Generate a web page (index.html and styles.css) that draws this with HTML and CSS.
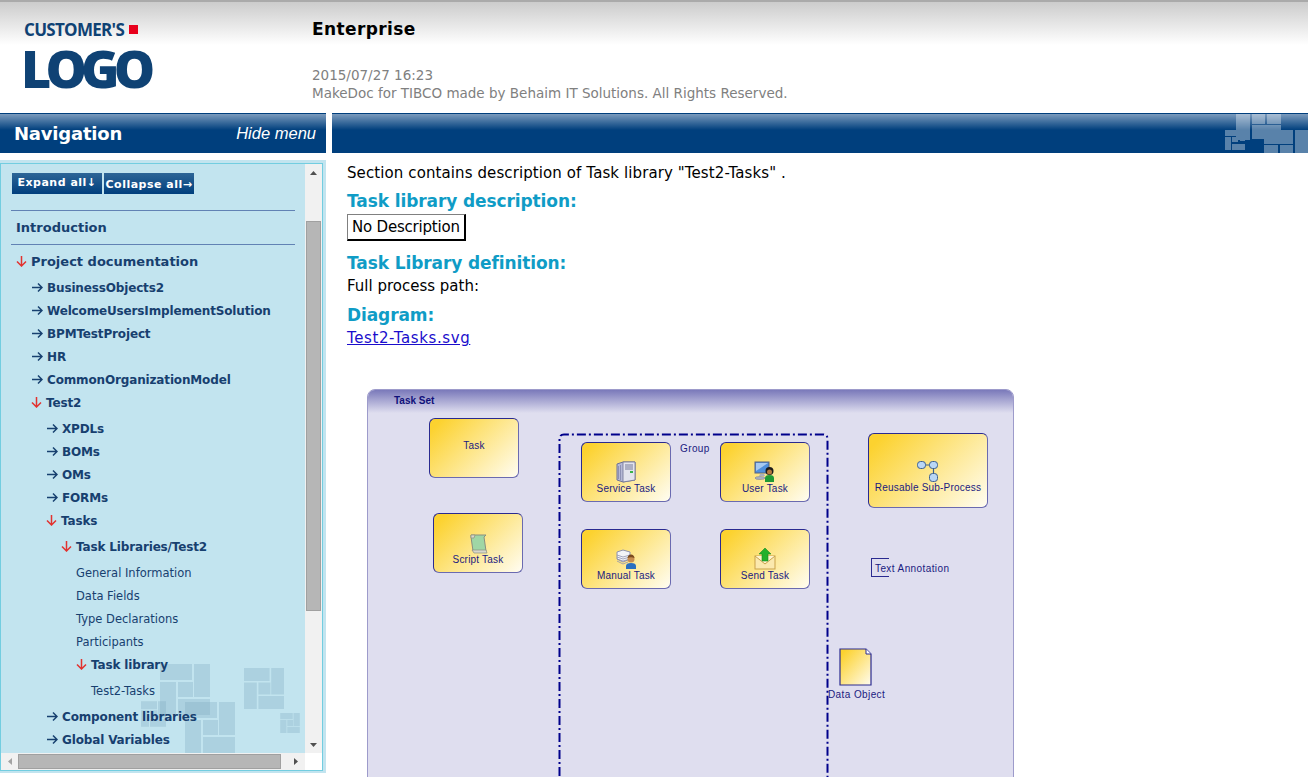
FILE: index.html
```html
<!DOCTYPE html>
<html lang="en">
<head>
    <meta charset="UTF-8">
    <meta name="viewport" content="width=device-width, initial-scale=1.0">
    <title>Enterprise - MakeDoc</title>
    <link rel="stylesheet" href="styles.css">
</head>
<body>
    <svg class="defs" width="0" height="0">
        <symbol id="arrow-right" viewBox="0 0 11 11">
            <path d="M0 5.5H10M6 1.5L10 5.5L6 9.5" fill="none" stroke="#17406f" stroke-width="1.5"/>
        </symbol>
        <symbol id="arrow-down" viewBox="0 0 11 11">
            <path d="M5.5 0V10M1 5.5L5.5 10L10 5.5" fill="none" stroke="#e2322f" stroke-width="1.5"/>
        </symbol>
        <symbol id="blocks" viewBox="0 0 50 51">
            <path d="M0 0h32v16H0zM34 0h16v33H34zM0 18h16v33H0zM18 18h15v15H18zM18 35h32v16H18z"/>
        </symbol>
    </svg>

    <header class="top">
        <div class="logo">
            <div class="logo-small">CUSTOMER'S<span class="logo-square"></span></div>
            <div class="logo-big">LOGO</div>
        </div>
        <div class="top-info">
            <h1>Enterprise</h1>
            <p>2015/07/27 16:23</p>
            <p>MakeDoc for TIBCO made by Behaim IT Solutions. All Rights Reserved.</p>
        </div>
    </header>

    <div class="columns">
        <aside class="side">
            <div class="bar side-bar">
                <span class="side-title">Navigation</span>
                <span class="side-hide">Hide menu</span>
            </div>
            <div class="panel">
                <div class="panel-inner">
                    <nav class="tree-area">
                        <svg class="panel-marks" width="304" height="100" viewBox="0 0 304 100">
                            <use href="#blocks" x="159" y="11" width="50" height="51"/>
                            <use href="#blocks" x="243" y="15" width="40" height="41"/>
                            <use href="#blocks" x="184" y="49" width="50" height="51"/>
                            <use href="#blocks" x="140" y="48" width="25" height="26"/>
                            <use href="#blocks" x="279" y="60" width="20" height="20"/>
                        </svg>
                        <div class="tree-buttons">
                            <button type="button">Expand all↓</button>
                            <button type="button" class="btn-low">Collapse all→</button>
                        </div>
                        <hr>
                        <div class="row row-top">Introduction</div>
                        <hr>
                        <ul class="tree">
                            <li>
                                <div class="row row-top"><svg class="arrow"><use href="#arrow-down"/></svg>Project documentation</div>
                                <ul>
                                    <li><div class="row row-strong"><svg class="arrow arrow-r"><use href="#arrow-right"/></svg>BusinessObjects2</div></li>
                                    <li><div class="row row-strong"><svg class="arrow arrow-r"><use href="#arrow-right"/></svg>WelcomeUsersImplementSolution</div></li>
                                    <li><div class="row row-strong"><svg class="arrow arrow-r"><use href="#arrow-right"/></svg>BPMTestProject</div></li>
                                    <li><div class="row row-strong"><svg class="arrow arrow-r"><use href="#arrow-right"/></svg>HR</div></li>
                                    <li><div class="row row-strong"><svg class="arrow arrow-r"><use href="#arrow-right"/></svg>CommonOrganizationModel</div></li>
                                    <li>
                                        <div class="row row-strong"><svg class="arrow"><use href="#arrow-down"/></svg>Test2</div>
                                        <ul>
                                            <li><div class="row row-strong"><svg class="arrow arrow-r"><use href="#arrow-right"/></svg>XPDLs</div></li>
                                            <li><div class="row row-strong"><svg class="arrow arrow-r"><use href="#arrow-right"/></svg>BOMs</div></li>
                                            <li><div class="row row-strong"><svg class="arrow arrow-r"><use href="#arrow-right"/></svg>OMs</div></li>
                                            <li><div class="row row-strong"><svg class="arrow arrow-r"><use href="#arrow-right"/></svg>FORMs</div></li>
                                            <li>
                                                <div class="row row-strong"><svg class="arrow"><use href="#arrow-down"/></svg>Tasks</div>
                                                <ul>
                                                    <li>
                                                        <div class="row row-strong"><svg class="arrow"><use href="#arrow-down"/></svg>Task Libraries/Test2</div>
                                                        <ul>
                                                            <li><div class="row">General Information</div></li>
                                                            <li><div class="row">Data Fields</div></li>
                                                            <li><div class="row">Type Declarations</div></li>
                                                            <li><div class="row">Participants</div></li>
                                                            <li>
                                                                <div class="row row-strong"><svg class="arrow"><use href="#arrow-down"/></svg>Task library</div>
                                                                <ul class="tree-end">
                                                                    <li><div class="row">Test2-Tasks</div></li>
                                                                </ul>
                                                            </li>
                                                        </ul>
                                                    </li>
                                                </ul>
                                            </li>
                                            <li><div class="row row-strong"><svg class="arrow arrow-r"><use href="#arrow-right"/></svg>Component libraries</div></li>
                                            <li><div class="row row-strong"><svg class="arrow arrow-r"><use href="#arrow-right"/></svg>Global Variables</div></li>
                                        </ul>
                                    </li>
                                </ul>
                            </li>
                        </ul>
                    </nav>
                    <div class="sb-v">
                        <svg class="sb-btn" width="17" height="17"><path d="M5 11H12L8.5 7Z" fill="#505050"/></svg>
                        <div class="sb-v-thumb"></div>
                        <svg class="sb-btn" width="17" height="17"><path d="M5 7H12L8.5 11Z" fill="#505050"/></svg>
                    </div>
                    <div class="sb-h">
                        <svg class="sb-btn" width="17" height="17"><path d="M11 5V12L7 8.5Z" fill="#a3a3a3"/></svg>
                        <div class="sb-h-thumb"></div>
                        <svg class="sb-btn" width="17" height="17"><path d="M6 5V12L10 8.5Z" fill="#505050"/></svg>
                    </div>
                </div>
            </div>
        </aside>

        <main class="content">
            <div class="bar content-bar">
                <svg class="bar-marks" width="83" height="40" viewBox="0 0 83 40">
                    <path d="M11 0h14v26H11zM27 0h13v10H27zM42 0h14v10H42zM27 11h29v14H27zM39 16h29v14H39zM70 16h13v24H70zM39 31h14v9H39zM55 31h13v9H55zM0 16h13v6H0zM0 23h6v13H0zM7 23h6v5H7zM7 30h13v6H7zM15 16h5v11h-5z"/>
                </svg>
            </div>
            <div class="doc">
                <p class="intro">Section contains description of Task library "Test2-Tasks" .</p>
                <h2>Task library description:</h2>
                <div class="desc-box">No Description</div>
                <h2 class="h-def">Task Library definition:</h2>
                <p>Full process path:</p>
                <h2 class="h-diagram">Diagram:</h2>
                <p><a href="#">Test2-Tasks.svg</a></p>

                <div class="diagram">
                    <div class="diagram-head">Task Set</div>

                    <svg class="group-line" width="272" height="360" viewBox="0 0 272 360">
                        <path d="M1.5 360V6Q1.5 1.5 6 1.5H265Q269.5 1.5 269.5 6V360" fill="none" stroke="#00008b" stroke-width="2" stroke-dasharray="9 3 2 3"/>
                    </svg>
                    <span class="d-label group-name">Group</span>

                    <div class="node n-task"><span>Task</span></div>

                    <div class="node n-script">
                        <svg width="20" height="20" viewBox="0 0 20 20">
                            <path d="M3 1H18L16 3L18 17H5L3 3Z" fill="#9fd6a5" stroke="#8a8f80"/>
                            <path d="M3 1H7L6 4H3ZM4 16H18L19 19H6Z" fill="#d8d8cc" stroke="#8a8f80" stroke-width=".7"/>
                        </svg>
                        <span>Script Task</span>
                    </div>

                    <div class="node n-service">
                        <svg width="20" height="22" viewBox="0 0 20 22">
                            <path d="M1 3L7 1H19V19L7 21L1 19Z" fill="#b6b9d6" stroke="#6f7295"/>
                            <path d="M7 1H19V19L7 21Z" fill="#e3e4ee" stroke="#6f7295" stroke-width=".8"/>
                            <path d="M9 4H17M9 6H17M9 8H17" stroke="#777a99"/>
                            <rect x="14" y="10" width="3" height="2" fill="#38b34a"/>
                            <path d="M2.500 5V18M4.500 4V19" stroke="#8d90b3"/>
                        </svg>
                        <span>Service Task</span>
                    </div>

                    <div class="node n-user">
                        <svg width="22" height="22" viewBox="0 0 22 22">
                            <rect x="1" y="1" width="14" height="11" fill="#4f8fdc" stroke="#566080"/>
                            <path d="M2 2H14L2 10Z" fill="#a7c9f0"/>
                            <path d="M6 13H10L11 15H5Z" fill="#aaaebb"/>
                            <ellipse cx="6" cy="17" rx="5" ry="1.500" fill="#aab0c0" stroke="#70758a" stroke-width=".5"/>
                            <circle cx="15.500" cy="10" r="4" fill="#1b1b1b"/>
                            <circle cx="15.500" cy="11" r="2.500" fill="#b5793e"/>
                            <path d="M11 21V17Q11 14 15.500 14Q20 14 20 17V21Z" fill="#1f9a33"/>
                        </svg>
                        <span>User Task</span>
                    </div>

                    <div class="node n-manual">
                        <svg width="21" height="21" viewBox="0 0 21 21">
                            <path d="M1 3L7 1L14 3V10L7 13L1 10Z" fill="#f3f4f8" stroke="#8e92ae"/>
                            <path d="M1 6L7 8L14 6M1 8L7 10L14 8M1 10L7 12L14 10M1 12L7 15L12 13" fill="none" stroke="#8e92ae" stroke-width=".8"/>
                            <circle cx="15" cy="10" r="3.500" fill="#c88d4f"/>
                            <path d="M11.500 9Q12 5.500 15 5.500Q18 5.500 18.500 9Q15 7.500 11.500 9Z" fill="#7a4a1e"/>
                            <path d="M10 20V17Q10 14 15 14Q20 14 20 17V20Z" fill="#2a6fc0"/>
                        </svg>
                        <span>Manual Task</span>
                    </div>

                    <div class="node n-send">
                        <svg width="22" height="23" viewBox="0 0 22 23">
                            <rect x="1" y="9" width="20" height="13" fill="#fbe9ae" stroke="#c9a24a"/>
                            <path d="M1 9L11 17L21 9" fill="#fff4cf" stroke="#c9a24a"/>
                            <path d="M11 1L17 7H14V14H8V7H5Z" fill="#22b02c" stroke="#1a8a22" stroke-width=".6"/>
                        </svg>
                        <span>Send Task</span>
                    </div>

                    <div class="node n-reusable">
                        <svg width="22" height="21" viewBox="0 0 22 21">
                            <path d="M8 4H13M16.500 8V13" stroke="#3a5f8f" stroke-width="1.200"/>
                            <rect x=".5" y=".5" width="8" height="7" rx="3" fill="#b9d6f5" stroke="#3a5f8f"/>
                            <rect x="12.500" y=".5" width="8" height="7" rx="3" fill="#b9d6f5" stroke="#3a5f8f"/>
                            <rect x="12.500" y="12.500" width="8" height="8" rx="3" fill="#b9d6f5" stroke="#3a5f8f"/>
                        </svg>
                        <span>Reusable Sub-Process</span>
                    </div>

                    <div class="annotation"></div>
                    <span class="d-label annotation-text">Text Annotation</span>

                    <svg class="data-object" width="33" height="38" viewBox="0 0 33 38">
                        <defs>
                            <linearGradient id="doc-fill" x1="0" y1="0" x2="1" y2="1">
                                <stop offset=".1" stop-color="#fcd22f"/>
                                <stop offset="1" stop-color="#fffcee"/>
                            </linearGradient>
                        </defs>
                        <path d="M1 1H27L32 6V37H1Z" fill="url(#doc-fill)" stroke="#2a2a90" stroke-width="1.200"/>
                        <path d="M27 1V6H32" fill="#fff" stroke="#2a2a90"/>
                    </svg>
                    <span class="d-label data-text">Data Object</span>
                </div>
            </div>
        </main>
    </div>
</body>
</html>
```

FILE: styles.css
```css
html, body {
    height: 777px;
    overflow: hidden;
}
body {
    margin: 0;
    font-family: "DejaVu Sans", Verdana, sans-serif;
    font-size: 15px;
    color: #000;
    background: #fff;
}
.defs {
    display: block;
    height: 0;
}

/* header */
.top {
    display: flex;
    height: 111px;
    border-top: 2px solid #aaa;
    background: linear-gradient(#ccc, #fff 43px);
}
.logo {
    width: 312px;
    box-sizing: border-box;
    padding: 16px 0 0 24px;
    color: #0f4274;
    font-family: "Open Sans", "Liberation Sans", sans-serif;
    font-weight: 700;
}
.logo-small {
    display: flex;
    align-items: center;
    height: 22px;
    font-size: 17px;
    letter-spacing: -0.7px;
}
.logo-square {
    width: 9px;
    height: 9px;
    margin-left: 5px;
    background: #e8001c;
}
.logo-big {
    margin: 4px 0 0 -3px;
    font-size: 52px;
    font-weight: 800;
    line-height: 48px;
    letter-spacing: -5.8px;
}
.top-info h1 {
    margin: 16px 0 0;
    font-size: 17px;
    line-height: 22px;
    font-weight: bold;
    letter-spacing: 0.4px;
}
.top-info p {
    margin: 0;
    color: #808080;
    font-size: 13.5px;
    line-height: 18px;
}
.top-info h1 + p {
    margin-top: 26px;
}

/* columns */
.columns {
    display: flex;
    gap: 6px;
}
.bar {
    height: 40px;
    box-sizing: border-box;
    border-top: 1px solid #003f7d;
    background: linear-gradient(#7b9bbd, #003f7d 16px);
    color: #fff;
}
.side {
    width: 326px;
    flex: none;
}
.side-bar {
    display: flex;
    justify-content: space-between;
    align-items: center;
    padding: 0 10px 0 14px;
}
.side-title {
    font-size: 18px;
    font-weight: bold;
    letter-spacing: -0.2px;
}
.side-hide {
    font-family: "Liberation Sans", Arial, sans-serif;
    font-size: 16.5px;
    font-style: italic;
}

/* navigation panel */
.panel {
    height: 613px;
    margin-top: 7px;
    box-sizing: border-box;
    padding: 3px 3px 2px 0;
    background: #c2e4ef;
}
.panel-inner {
    display: grid;
    grid-template-columns: 304px 17px;
    grid-template-rows: 589px 17px;
    height: 608px;
    box-sizing: border-box;
    border: 1px solid #72cde0;
    background: #fff;
}
.tree-area {
    position: relative;
    z-index: 0;
    overflow: hidden;
    box-sizing: border-box;
    padding: 9px 10px 0 15px;
    background: #c2e4ef;
    color: #17406f;
}
.panel-marks {
    position: absolute;
    z-index: -1;
    left: 0;
    top: 489px;
    fill: #7ba6bc;
    fill-opacity: 0.3;
}
.tree-buttons {
    display: flex;
    gap: 2px;
    margin-left: -4px;
}
.tree-buttons button {
    width: 90px;
    height: 21px;
    padding: 0 0 2px;
    border: 0;
    background: linear-gradient(#2d6597, #003f7d);
    color: #fff;
    font-family: "DejaVu Sans", Verdana, sans-serif;
    font-size: 11px;
    font-weight: bold;
    letter-spacing: 0.5px;
    white-space: nowrap;
}
.tree-buttons .btn-low {
    padding: 2px 0 0;
}
.tree-area hr {
    height: 1px;
    margin: 16px 0 5px -5px;
    border: 0;
    background: #6182b4;
}
.tree-area .row + hr {
    margin-top: 5px;
}
.tree, .tree ul {
    margin: 0;
    padding: 0;
    list-style: none;
}
.tree ul {
    margin-top: 3px;
    padding-left: 15px;
}
.tree .tree-end {
    margin-bottom: 3px;
}
.row {
    display: flex;
    align-items: center;
    height: 23px;
    white-space: nowrap;
    font-size: 11.5px;
}
.row-strong {
    font-size: 12px;
    font-weight: bold;
    letter-spacing: -0.15px;
}
.row-top {
    font-size: 13px;
    font-weight: bold;
}
.arrow {
    width: 11px;
    height: 11px;
    flex: none;
    margin-right: 4px;
}
.arrow-r {
    margin-left: 1px;
}

/* fake scrollbars, the page itself does not scroll */
.sb-v, .sb-h {
    display: flex;
    justify-content: space-between;
    align-items: center;
    background: #f1f1f1;
}
.sb-v {
    flex-direction: column;
}
.sb-btn {
    flex: none;
}
.sb-v-thumb {
    width: 13px;
    height: 388px;
    margin-top: 40px;
    margin-bottom: auto;
    border: 1px solid #a0a0a0;
    background: #b6b6b6;
}
.sb-h-thumb {
    width: 261px;
    height: 13px;
    margin-right: auto;
    border: 1px solid #a0a0a0;
    background: #b6b6b6;
}

/* document */
.content {
    flex: 1;
    min-width: 0;
    height: 664px;
    overflow: hidden;
}
.content-bar {
    position: relative;
}
.bar-marks {
    position: absolute;
    right: 0;
    top: 0;
    fill: #fff;
    fill-opacity: 0.35;
}
.doc {
    padding: 11px 0 0 15px;
}
.doc p {
    margin: 0;
    line-height: 18px;
}
.doc .intro {
    letter-spacing: 0.1px;
}
.doc h2 {
    margin: 9px 0 2px;
    color: #0f9cc6;
    font-size: 17px;
    line-height: 21px;
    letter-spacing: -0.1px;
}
.doc .h-def {
    margin: 12px 0 3px;
}
.doc .h-diagram {
    margin: 10px 0 3px;
}
.desc-box {
    display: inline-block;
    height: 24px;
    padding: 0 4px;
    border: 1px solid #808080;
    border-right: 2px solid #000;
    border-bottom: 2px solid #000;
    line-height: 24px;
    letter-spacing: -0.2px;
}
.doc a {
    color: #1a0dcc;
    letter-spacing: 0.6px;
}

/* process diagram, nodes sit on a free canvas */
.diagram {
    position: relative;
    width: 647px;
    height: 500px;
    margin: 42px 0 0 20px;
    box-sizing: border-box;
    border: 1px solid #9d9bcb;
    border-radius: 8px 8px 0 0;
    background: #dfdeef;
    font-family: "Liberation Sans", Arial, sans-serif;
}
.diagram-head {
    height: 23px;
    padding-left: 26px;
    border-radius: 7px 7px 0 0;
    background: linear-gradient(#7a79ba, #dfdeef);
    color: #10107a;
    font-size: 10px;
    font-weight: bold;
    line-height: 21px;
}
.node {
    position: absolute;
    display: flex;
    flex-direction: column;
    align-items: center;
    justify-content: flex-end;
    width: 90px;
    height: 60px;
    box-sizing: border-box;
    padding-bottom: 6px;
    border: 1px solid #2a2a90;
    border-right-color: #6a6ab0;
    border-bottom-color: #6a6ab0;
    border-radius: 6px;
    background: linear-gradient(135deg, #fcd22f 8%, #fffdf2 100%);
}
.node span, .d-label {
    color: #1a1a80;
    font-size: 10px;
    line-height: 12px;
    letter-spacing: 0.2px;
    white-space: nowrap;
}
.d-label {
    position: absolute;
    letter-spacing: 0.4px;
}
.node svg {
    display: block;
}
.n-task { left: 61px; top: 28px; justify-content: center; padding-bottom: 4px; }
.n-script { left: 65px; top: 123px; }
.n-service { left: 213px; top: 52px; }
.n-user { left: 352px; top: 52px; }
.n-manual { left: 213px; top: 139px; }
.n-send { left: 352px; top: 139px; }
.n-reusable { left: 500px; top: 43px; width: 120px; height: 75px; padding-bottom: 13px; }
.group-line {
    position: absolute;
    left: 190px;
    top: 43px;
}
.group-name { left: 312px; top: 53px; }
.annotation {
    position: absolute;
    left: 503px;
    top: 168px;
    width: 18px;
    height: 19px;
    box-sizing: border-box;
    border: 1px solid #2a2a90;
    border-right: 0;
}
.annotation-text { left: 507px; top: 173px; }
.data-object {
    position: absolute;
    left: 471px;
    top: 258px;
}
.data-text { left: 460px; top: 299px; }
```
